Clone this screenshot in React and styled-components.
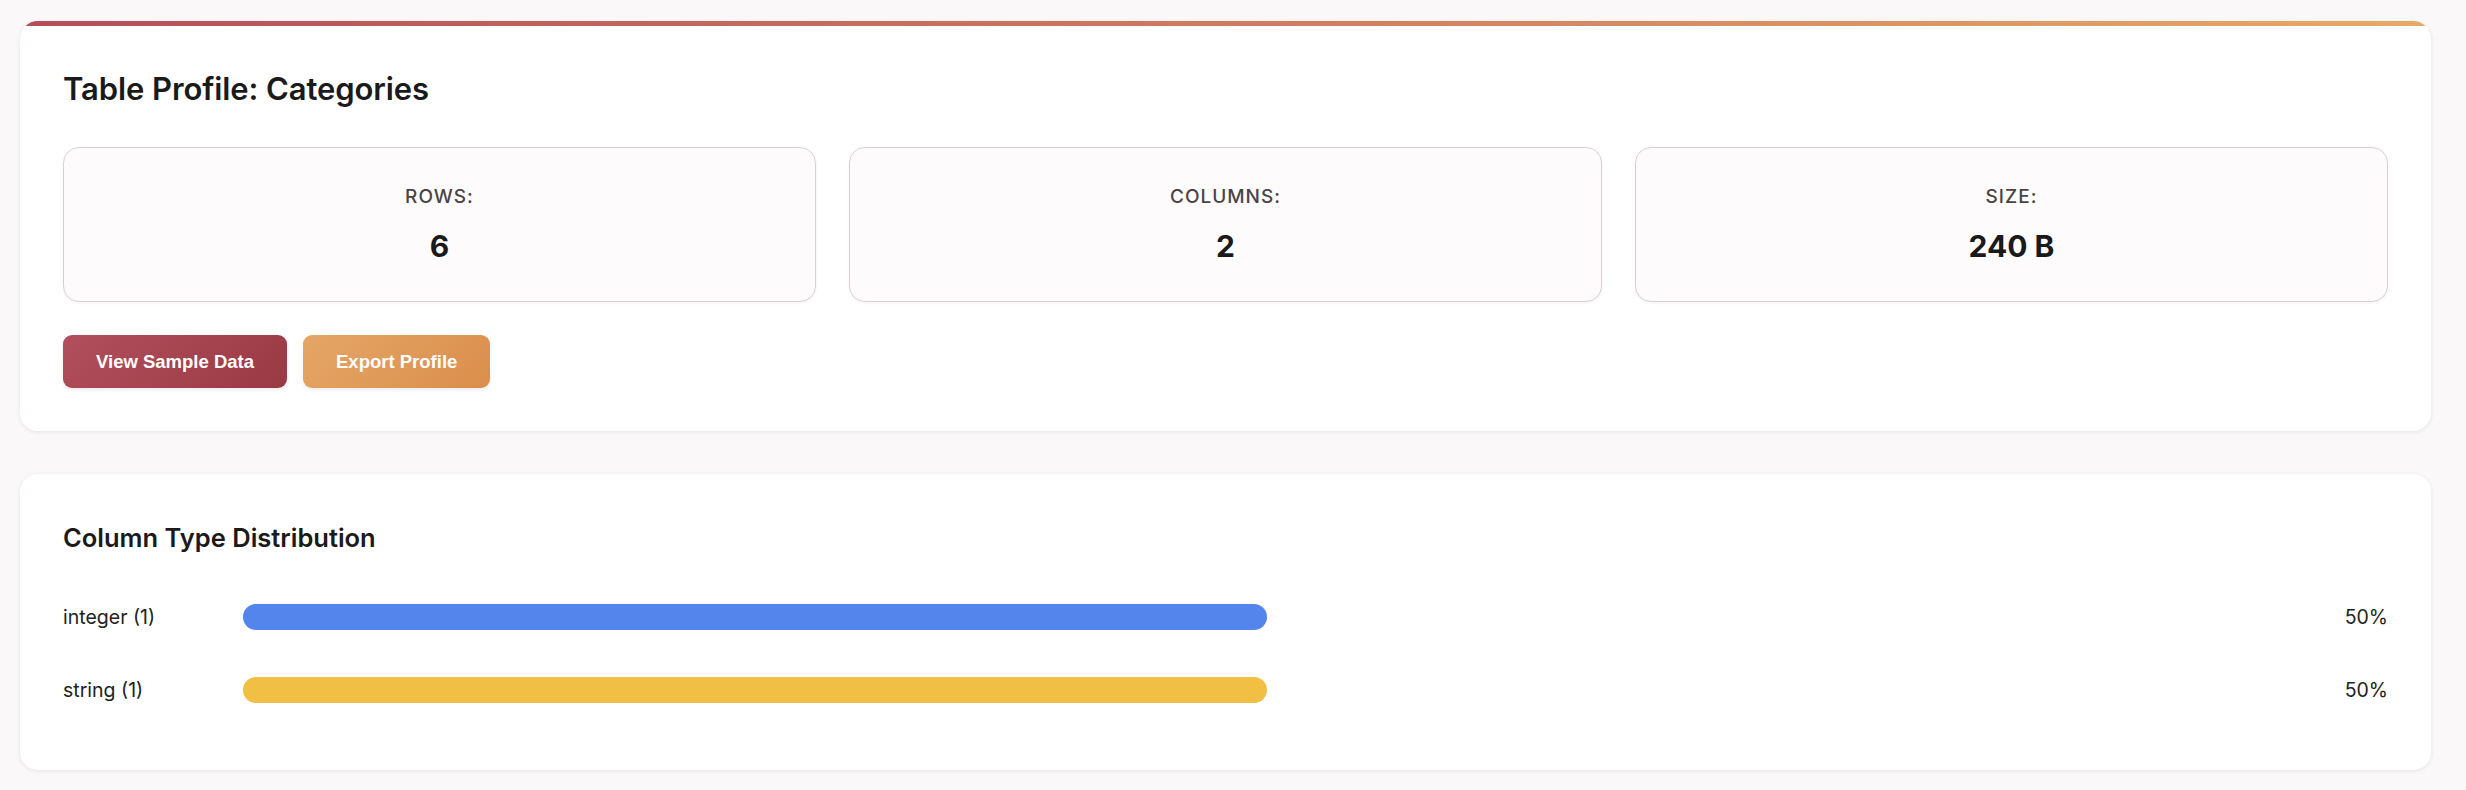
import React from "react";
import styled, { createGlobalStyle } from "styled-components";

const GlobalStyle = createGlobalStyle`
  body {
    margin: 0;
    background: #faf8f9;
    font-family: Inter, "Noto Sans", sans-serif;
    color: #1c1b1c;
  }
`;

const stats = [
  { label: "Rows:", value: "6" },
  { label: "Columns:", value: "2" },
  { label: "Size:", value: "240 B" },
];

const types = [
  { name: "integer", count: 1, percent: 50, color: "#5385ec" },
  { name: "string", count: 1, percent: 50, color: "#f0bf43" },
];

function App() {
  return (
    <Page>
      <GlobalStyle />
      <Card $accent>
        <Title>Table Profile: Categories</Title>
        <StatGrid>
          {stats.map((s) => (
            <StatBox key={s.label}>
              <StatLabel>{s.label}</StatLabel>
              <StatValue>{s.value}</StatValue>
            </StatBox>
          ))}
        </StatGrid>
        <Actions>
          <Button $from="#b24f5c" $to="#9a3944">
            View Sample Data
          </Button>
          <Button $from="#e4a667" $to="#db8e4b">
            Export Profile
          </Button>
        </Actions>
      </Card>

      <Card>
        <SubTitle>Column Type Distribution</SubTitle>
        <TypeList>
          {types.map((t) => (
            <TypeRow key={t.name}>
              <TypeName>
                {t.name} ({t.count})
              </TypeName>
              <Track>
                <Fill $color={t.color} style={{ width: `${t.percent}%` }} />
              </Track>
              <Percent>{t.percent}%</Percent>
            </TypeRow>
          ))}
        </TypeList>
      </Card>
    </Page>
  );
}

const Page = styled.div`
  display: flex;
  flex-direction: column;
  gap: 43px;
  padding: 21px 35px 18px 20px;
`;

const Card = styled.section`
  position: relative;
  overflow: hidden;
  background: #ffffff;
  border-radius: 18px;
  padding: 43px;
  box-shadow: 0 1px 4px rgba(50, 40, 70, 0.1);

  &::before {
    content: "";
    display: ${(p) => (p.$accent ? "block" : "none")};
    position: absolute;
    top: 0;
    left: 0;
    right: 0;
    height: 5px;
    background: linear-gradient(90deg, #b24f5a, #e6a966);
  }
`;

const Title = styled.h1`
  margin: 0 0 33px;
  font-size: 31px;
  line-height: 50px;
  font-weight: 600;
  letter-spacing: -0.1px;
  color: #1b1a1b;
`;

const StatGrid = styled.div`
  display: grid;
  grid-template-columns: repeat(3, 1fr);
  gap: 33px;
`;

const StatBox = styled.div`
  display: flex;
  flex-direction: column;
  align-items: center;
  padding: 37px 20px 37px;
  background: #fefbfc;
  border: 1px solid #dccfd3;
  border-radius: 16px;
  box-shadow: 0 1px 3px rgba(60, 30, 40, 0.06);
`;

const StatLabel = styled.div`
  font-size: 19px;
  line-height: 23px;
  font-weight: 500;
  letter-spacing: 1px;
  text-transform: uppercase;
  color: #4b4346;
  margin-bottom: 20px;
`;

const StatValue = styled.div`
  font-size: 30px;
  line-height: 36px;
  font-weight: 700;
  color: #1a1a1a;
`;

const Actions = styled.div`
  display: flex;
  gap: 16px;
  margin-top: 33px;
`;

const Button = styled.button`
  border: none;
  border-radius: 9px;
  padding: 16px 33px;
  font-family: "Liberation Sans", Arial, sans-serif;
  font-size: 18.5px;
  line-height: 21px;
  font-weight: 700;
  color: #ffffff;
  background: linear-gradient(135deg, ${(p) => p.$from}, ${(p) => p.$to});
  box-shadow: 0 2px 4px rgba(0, 0, 0, 0.08);
  cursor: pointer;
`;

const SubTitle = styled.h2`
  margin: 0 0 43px;
  font-size: 25.5px;
  line-height: 42px;
  font-weight: 600;
  color: #1b1a1b;
`;

const TypeList = styled.div`
  display: flex;
  flex-direction: column;
  gap: 43px;
  margin-bottom: 22px;
`;

const TypeRow = styled.div`
  display: flex;
  align-items: center;
  gap: 20px;
  height: 30px;
`;

const TypeName = styled.div`
  width: 160px;
  flex-shrink: 0;
  font-size: 19.5px;
  line-height: 30px;
  color: #222;
`;

const Track = styled.div`
  flex: 1;
  height: 26px;
  border-radius: 13px;
  background: #ffffff;
`;

const Fill = styled.div`
  height: 100%;
  border-radius: 13px;
  background: ${(p) => p.$color};
`;

const Percent = styled.div`
  width: 77px;
  flex-shrink: 0;
  text-align: right;
  font-size: 19.5px;
  line-height: 30px;
  color: #222;
`;

export default App;
